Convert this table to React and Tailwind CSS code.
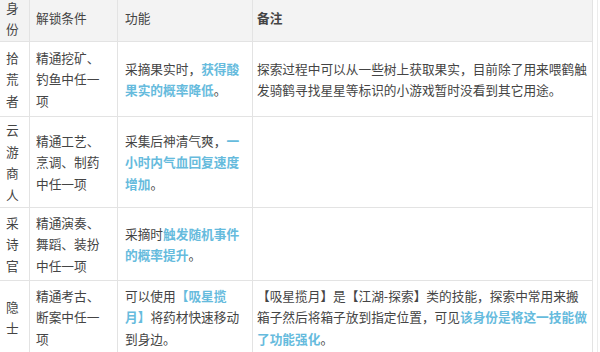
const rows = [
  {
    role: '拾荒者',
    cond: '精通挖矿、钓鱼中任一项',
    effect: (
      <>
        采摘果实时，<span className="font-bold text-[#66bbdd]">获得酸果实的概率降低</span>。
      </>
    ),
    note: '探索过程中可以从一些树上获取果实，目前除了用来喂鹤触发骑鹤寻找星星等标识的小游戏暂时没看到其它用途。',
    h: 'h-[75px]',
  },
  {
    role: '云游商人',
    cond: '精通工艺、烹调、制药中任一项',
    effect: (
      <>
        采集后神清气爽，<span className="font-bold text-[#66bbdd]">一小时内气血回复速度增加</span>。
      </>
    ),
    note: '',
    h: 'h-[91px]',
  },
  {
    role: '采诗官',
    cond: '精通演奏、舞蹈、装扮中任一项',
    effect: (
      <>
        采摘时<span className="font-bold text-[#66bbdd]">触发随机事件的概率提升</span>。
      </>
    ),
    note: '',
    h: 'h-[73px]',
  },
  {
    role: '隐士',
    cond: '精通考古、断案中任一项',
    effect: (
      <>
        可以使用<span className="font-bold text-[#66bbdd]">【吸星揽月】</span>将药材快速移动到身边。
      </>
    ),
    note: (
      <>
        【吸星揽月】是【江湖-探索】类的技能，探索中常用来搬箱子然后将箱子放到指定位置，可见
        <span className="font-bold text-[#66bbdd]">该身份是将这一技能做了功能强化</span>。
      </>
    ),
    h: 'h-[73px]',
  },
]

function Row({ row }) {
  return (
    <div className={`grid grid-cols-[30px_88px_135px_340px] border-b border-[#e3e3e3] ${row.h}`}>
      <div className="flex items-center border-r border-[#e3e3e3] pl-[6px] pr-[4px]">
        <div>{row.role}</div>
      </div>
      <div className="flex items-center border-r border-[#e3e3e3] px-[6px]">
        <div>{row.cond}</div>
      </div>
      <div className="flex items-center border-r border-[#e3e3e3] px-[7px]">
        <div>{row.effect}</div>
      </div>
      <div className="flex items-center border-r border-[#e3e3e3] pl-[4px] pr-[2px]">
        <div>{row.note}</div>
      </div>
    </div>
  )
}

export default function App() {
  return (
    <div className="h-[352px] w-[600px] overflow-hidden bg-white">
      <div
        className="-mt-[5px] w-[598px] border-r border-[#ececec] text-[12.7px] leading-[21.5px] text-[#444]"
        style={{ fontFamily: '"Noto Sans CJK SC", "Noto Sans", sans-serif' }}
      >
        <div className="w-[593px]">
          {/* header */}
          <div className="grid h-[47px] grid-cols-[30px_88px_135px_340px] border-b border-[#e3e3e3] bg-[#f3f3f3]">
            <div className="flex items-center border-r border-[#e3e3e3] pl-[6px] pr-[4px]">
              <div>身份</div>
            </div>
            <div className="flex items-center border-r border-[#e3e3e3] px-[6px]">解锁条件</div>
            <div className="flex items-center border-r border-[#e3e3e3] px-[7px]">功能</div>
            <div className="flex items-center border-r border-[#e3e3e3] pl-[4px] font-bold">备注</div>
          </div>

          {rows.map((row) => (
            <Row key={row.role} row={row} />
          ))}
        </div>
      </div>
    </div>
  )
}
